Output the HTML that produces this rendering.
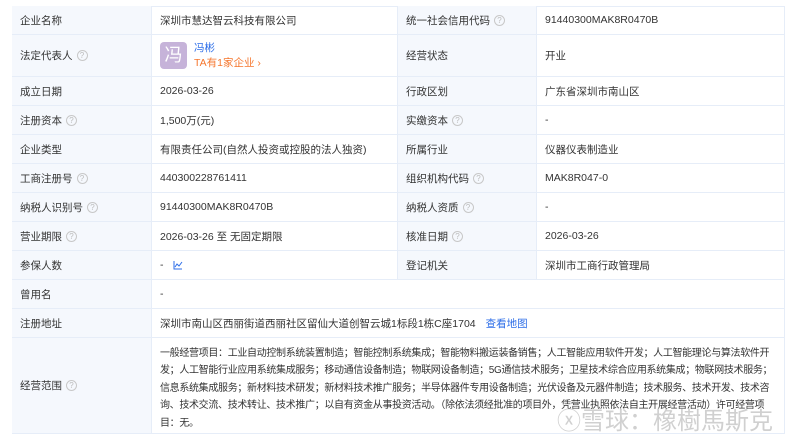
<!DOCTYPE html>
<html><head><meta charset="utf-8"><style>
*{margin:0;padding:0;box-sizing:border-box}
body{width:800px;height:446px;background:#fff;position:relative;overflow:hidden;font-family:"Liberation Sans","Noto Sans CJK SC",sans-serif;font-size:10.5px;color:#333}
.c{position:absolute;border-right:1px solid #e6edf8;border-bottom:1px solid #e6edf8;padding-left:8px;display:flex;align-items:center}
.l{background:#f5f8fd}
.q{display:inline-block;width:11px;height:11px;border:1px solid #c8c8c8;border-radius:50%;color:#bbb;font-size:8px;line-height:9px;text-align:center;margin-left:4px}
.wm{position:absolute;left:557px;top:404px;font-size:24px;line-height:30px;color:#d0d0d0;font-family:"Noto Sans CJK SC",sans-serif;white-space:nowrap}
.sc div{white-space:nowrap;letter-spacing:-0.33px}
</style></head><body>
<div style="position:absolute;left:12px;top:6px;width:773px;height:428px;border-top:1px solid #e6edf8;border-left:1px solid #e6edf8"></div>

<div class="c l" style="left:12px;top:6px;width:140px;height:29px">企业名称</div>
<div class="c" style="left:152px;top:6px;width:246px;height:29px">深圳市慧达智云科技有限公司</div>
<div class="c l" style="left:398px;top:6px;width:139px;height:29px">统一社会信用代码<span class="q">?</span></div>
<div class="c" style="left:537px;top:6px;width:248px;height:29px">91440300MAK8R0470B</div>

<div class="c l" style="left:12px;top:35px;width:140px;height:42px">法定代表人<span class="q">?</span></div>
<div class="c" style="left:152px;top:35px;width:246px;height:42px">
<div style="width:27px;height:27px;background:#c6b3d9;border-radius:4px;color:#fff;font-size:18px;text-align:center;line-height:27px;margin-right:7px">冯</div>
<div><div style="color:#2d6ee8;line-height:14px">冯彬</div><div style="color:#f5762d;line-height:16px">TA有1家企业 ›</div></div></div>
<div class="c l" style="left:398px;top:35px;width:139px;height:42px">经营状态</div>
<div class="c" style="left:537px;top:35px;width:248px;height:42px">开业</div>

<div class="c l" style="left:12px;top:77px;width:140px;height:29px">成立日期</div>
<div class="c" style="left:152px;top:77px;width:246px;height:29px">2026-03-26</div>
<div class="c l" style="left:398px;top:77px;width:139px;height:29px">行政区划</div>
<div class="c" style="left:537px;top:77px;width:248px;height:29px">广东省深圳市南山区</div>

<div class="c l" style="left:12px;top:106px;width:140px;height:29px">注册资本<span class="q">?</span></div>
<div class="c" style="left:152px;top:106px;width:246px;height:29px">1,500万(元)</div>
<div class="c l" style="left:398px;top:106px;width:139px;height:29px">实缴资本<span class="q">?</span></div>
<div class="c" style="left:537px;top:106px;width:248px;height:29px">-</div>

<div class="c l" style="left:12px;top:135px;width:140px;height:29px">企业类型</div>
<div class="c" style="left:152px;top:135px;width:246px;height:29px">有限责任公司(自然人投资或控股的法人独资)</div>
<div class="c l" style="left:398px;top:135px;width:139px;height:29px">所属行业</div>
<div class="c" style="left:537px;top:135px;width:248px;height:29px">仪器仪表制造业</div>

<div class="c l" style="left:12px;top:164px;width:140px;height:29px">工商注册号<span class="q">?</span></div>
<div class="c" style="left:152px;top:164px;width:246px;height:29px">440300228761411</div>
<div class="c l" style="left:398px;top:164px;width:139px;height:29px">组织机构代码<span class="q">?</span></div>
<div class="c" style="left:537px;top:164px;width:248px;height:29px">MAK8R047-0</div>

<div class="c l" style="left:12px;top:193px;width:140px;height:29px">纳税人识别号<span class="q">?</span></div>
<div class="c" style="left:152px;top:193px;width:246px;height:29px">91440300MAK8R0470B</div>
<div class="c l" style="left:398px;top:193px;width:139px;height:29px">纳税人资质<span class="q">?</span></div>
<div class="c" style="left:537px;top:193px;width:248px;height:29px">-</div>

<div class="c l" style="left:12px;top:222px;width:140px;height:29px">营业期限<span class="q">?</span></div>
<div class="c" style="left:152px;top:222px;width:246px;height:29px">2026-03-26 至 无固定期限</div>
<div class="c l" style="left:398px;top:222px;width:139px;height:29px">核准日期<span class="q">?</span></div>
<div class="c" style="left:537px;top:222px;width:248px;height:29px">2026-03-26</div>

<div class="c l" style="left:12px;top:251px;width:140px;height:29px">参保人数</div>
<div class="c" style="left:152px;top:251px;width:246px;height:29px">-<svg width="10" height="10" viewBox="0 0 10 10" style="margin-left:9px"><path d="M1 1V9H9M2 7L4 4L6 6L9 2" fill="none" stroke="#2d6ee8" stroke-width="1"/></svg></div>
<div class="c l" style="left:398px;top:251px;width:139px;height:29px">登记机关</div>
<div class="c" style="left:537px;top:251px;width:248px;height:29px">深圳市工商行政管理局</div>

<div class="c l" style="left:12px;top:280px;width:140px;height:29px">曾用名</div>
<div class="c" style="left:152px;top:280px;width:633px;height:29px">-</div>

<div class="c l" style="left:12px;top:309px;width:140px;height:29px">注册地址</div>
<div class="c" style="left:152px;top:309px;width:633px;height:29px">深圳市南山区西丽街道西丽社区留仙大道创智云城1标段1栋C座1704<span style="color:#2d6ee8;margin-left:10px">查看地图</span></div>

<div class="c l" style="left:12px;top:338px;width:140px;height:96px">经营范围<span class="q">?</span></div>
<div class="c sc" style="left:152px;top:338px;width:633px;height:96px;padding-top:7px;display:block;line-height:17.4px;font-size:10px">
<div>一般经营项目：工业自动控制系统装置制造；智能控制系统集成；智能物料搬运装备销售；人工智能应用软件开发；人工智能理论与算法软件开</div>
<div>发；人工智能行业应用系统集成服务；移动通信设备制造；物联网设备制造；5G通信技术服务；卫星技术综合应用系统集成；物联网技术服务；</div>
<div>信息系统集成服务；新材料技术研发；新材料技术推广服务；半导体器件专用设备制造；光伏设备及元器件制造；技术服务、技术开发、技术咨</div>
<div>询、技术交流、技术转让、技术推广；以自有资金从事投资活动。（除依法须经批准的项目外，凭营业执照依法自主开展经营活动）许可经营项</div>
<div>目：无。</div>
</div>

<div class="wm">ⓧ雪球：橡樹馬斯克</div>
</body></html>
